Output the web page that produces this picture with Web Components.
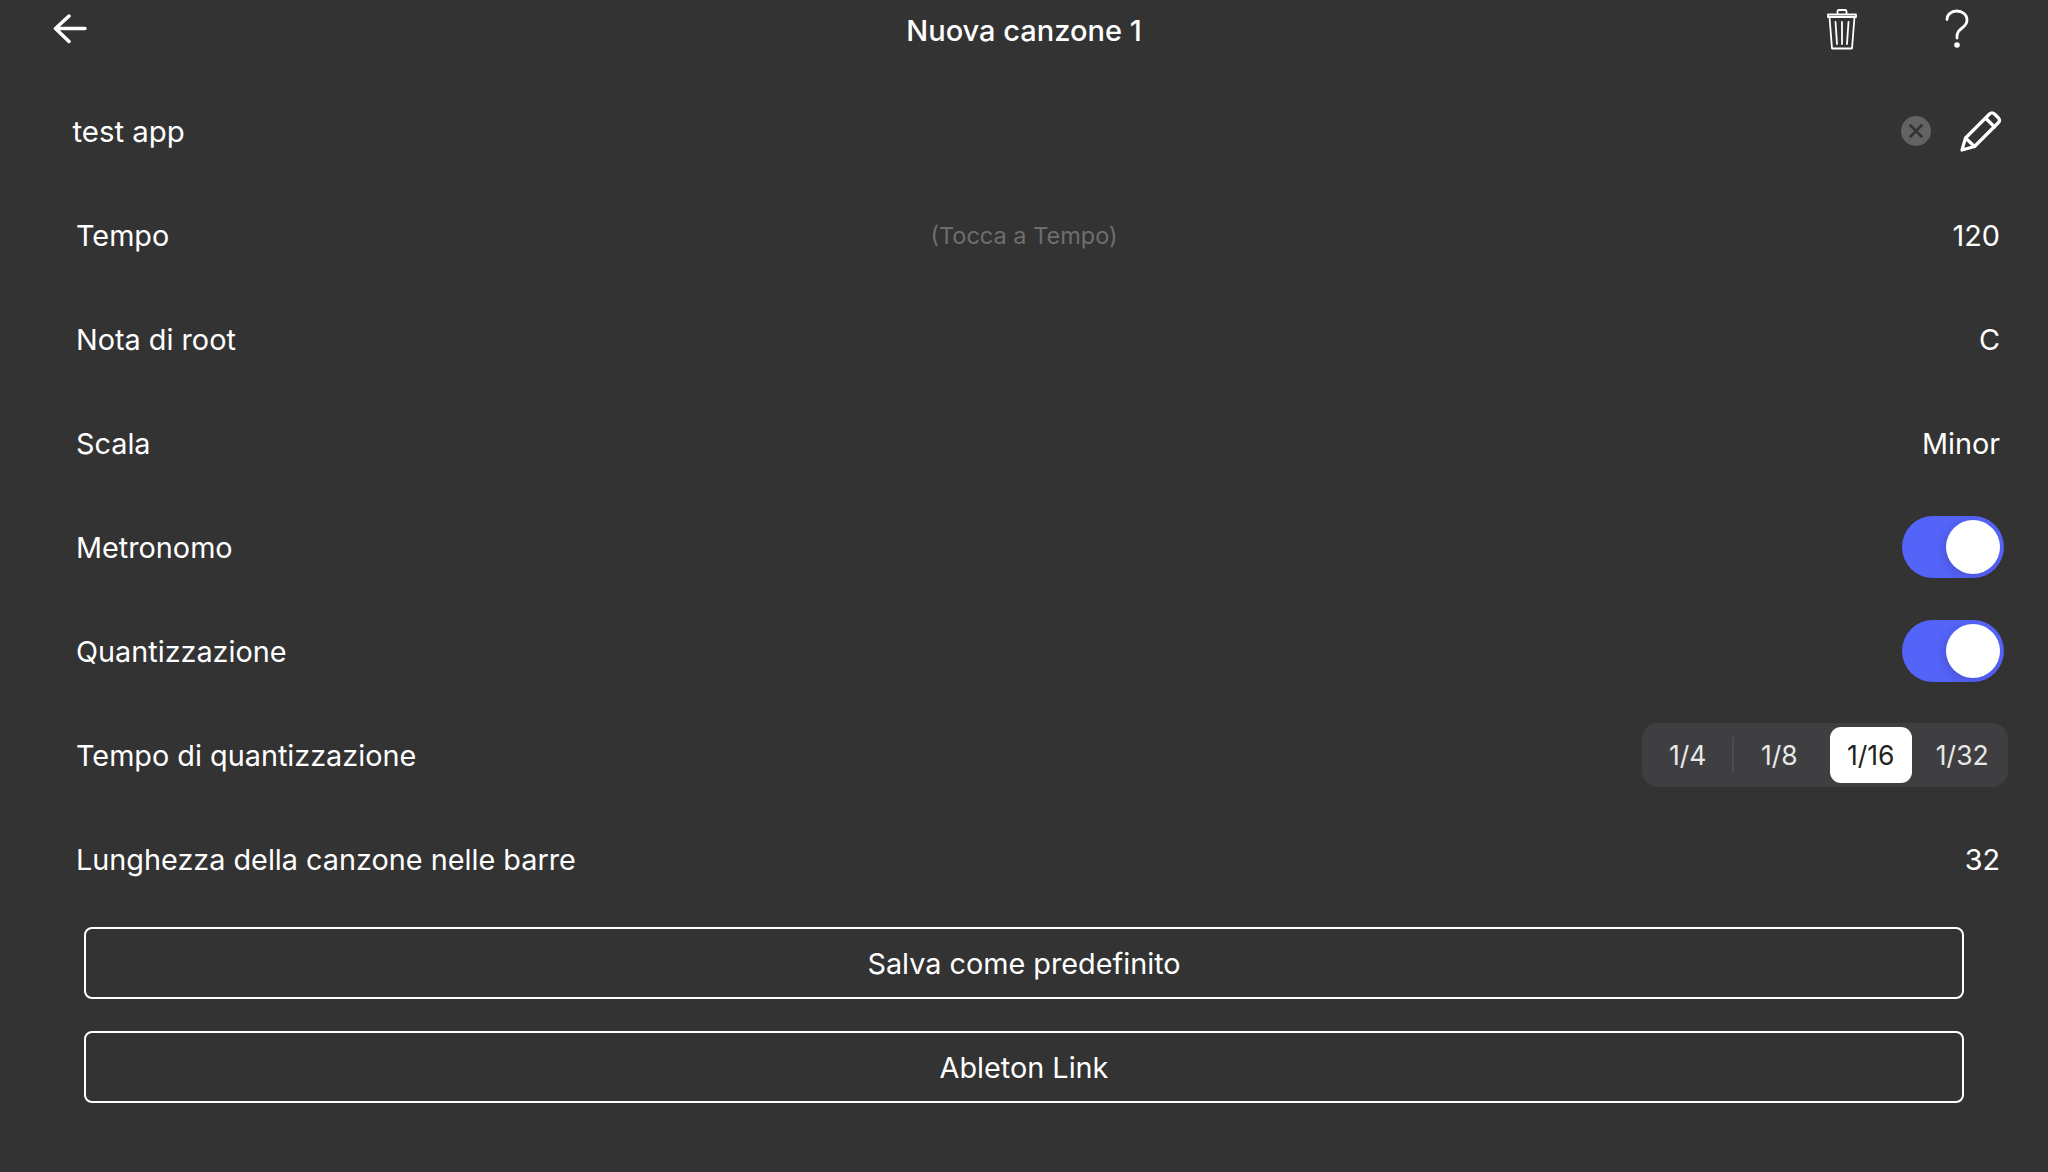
<!DOCTYPE html>
<html lang="it">
<head>
<meta charset="utf-8">
<title>Nuova canzone 1</title>
<style>
  html, body { margin: 0; height: 100%; background: #333333; }
  body { color: #fff; font-family: Inter, "Noto Sans", sans-serif; font-size: 28.800px; }
</style>
</head>
<body>

<song-settings>
  <top-bar title-text="Nuova canzone 1"></top-bar>
  <name-row>test app</name-row>
  <setting-row label="Tempo" hint="(Tocca a Tempo)">120</setting-row>
  <setting-row label="Nota di root">C</setting-row>
  <setting-row label="Scala">Minor</setting-row>
  <setting-row label="Metronomo"><toggle-switch slot="control"></toggle-switch></setting-row>
  <setting-row label="Quantizzazione"><toggle-switch slot="control"></toggle-switch></setting-row>
  <setting-row label="Tempo di quantizzazione"><segment-picker slot="control" options="1/4,1/8,1/16,1/32" selected="2"></segment-picker></setting-row>
  <setting-row label="Lunghezza della canzone nelle barre">32</setting-row>
  <outline-button>Salva come predefinito</outline-button>
  <outline-button>Ableton Link</outline-button>
</song-settings>

<script>
class SongSettings extends HTMLElement {
  constructor() {
    super();
    this.attachShadow({mode: 'open'}).innerHTML = `
      <style>
        :host { display: flex; flex-direction: column; height: 1172px; box-sizing: border-box; }
      </style>
      <slot></slot>
    `;
  }
}

class TopBar extends HTMLElement {
  constructor() {
    super();
    this.attachShadow({mode: 'open'}).innerHTML = `
      <style>
        :host { display: grid; grid-template-columns: minmax(0, 1fr) auto minmax(0, 1fr); align-items: center; height: 62px; margin-bottom: 17px; }
        .title { font-size: 29px; font-weight: 500; line-height: 62px; }
        .left { display: flex; padding-left: 53px; }
        .right { display: flex; justify-content: flex-end; align-items: center; padding-right: 79px; gap: 87px; }
        svg { display: block; fill: none; stroke: #fff; stroke-linecap: round; stroke-linejoin: round; }
      </style>
      <div class="left">
        <svg width="34" height="30" viewBox="0 0 34 30" stroke-width="3.500" style="margin-top:-4px">
          <path d="M32 14.500H3M16 2 2.500 14.500 16 27.500"/>
        </svg>
      </div>
      <div class="title">${this.getAttribute('title-text')}</div>
      <div class="right">
        <svg width="32" height="42" viewBox="0 0 32 42" stroke-width="1.800" style="margin-top:-4px">
          <path d="M2 6.500H30V9H2ZM3.500 9 6 40.500H26L28.500 9M11.500 6.500V3.500Q11.500 2 13 2H19Q20.500 2 20.500 3.500V6.500M9.500 14 11 36M16 14V36M22.500 14 21 36"/>
        </svg>
        <svg width="24" height="40" viewBox="0 0 24 40" stroke-width="2.800" style="margin-top:-4px">
          <path d="M2 10.500C2 5.500 6.500 2 11.500 2 17.500 2 22 5.800 22 11 22 15 20 17 16.500 19.500 13.500 21.600 12 23.500 12 27.500V29"/>
          <circle cx="12" cy="36" r="1.400" fill="#fff"/>
        </svg>
      </div>
    `;
  }
}

class NameRow extends HTMLElement {
  constructor() {
    super();
    this.attachShadow({mode: 'open'}).innerHTML = `
      <style>
        :host { display: flex; align-items: center; height: 104px; padding: 0 46px 0 72.500px; }
        .text { flex: 1; font-size: 29.400px; }
        .clear { width: 30px; height: 30px; margin-right: 29px; }
        svg { display: block; }
      </style>
      <div class="text"><slot></slot></div>
      <svg class="clear" viewBox="0 0 30 30">
        <circle cx="15" cy="15" r="15" fill="#636366"/>
        <path d="M9.500 9.500 20.500 20.500M20.500 9.500 9.500 20.500" stroke="#333" stroke-width="2.600" stroke-linecap="round"/>
      </svg>
      <svg width="42" height="42" viewBox="0 0 42 42" fill="none" stroke="#fff" stroke-width="3.200" stroke-linejoin="round" stroke-linecap="round">
        <path d="M2 40 5.500 28 29.500 4Q32 1.800 34.500 4L38.500 8Q40.500 10.500 38.500 12.500L14.500 36.500ZM5.500 28 14.500 36.500M25.500 8 34.500 17"/>
      </svg>
    `;
  }
}

class SettingRow extends HTMLElement {
  constructor() {
    super();
    const hint = this.getAttribute('hint');
    this.attachShadow({mode: 'open'}).innerHTML = `
      <style>
        :host { display: grid; grid-template-columns: minmax(0, 1fr) auto minmax(0, 1fr); align-items: center; height: 104px; padding: 0 48px 0 76px; font-size: 28.800px; }
        .label { white-space: nowrap; }
        .hint { font-size: 23.500px; color: #6e6e6e; margin-right: 28px; }
        .end { display: flex; justify-content: flex-end; align-items: center; }
      </style>
      <div class="label">${this.getAttribute('label')}</div>
      <div class="hint">${hint || ''}</div>
      <div class="end"><slot></slot><slot name="control"></slot></div>
    `;
  }
}

class ToggleSwitch extends HTMLElement {
  constructor() {
    super();
    this.attachShadow({mode: 'open'}).innerHTML = `
      <style>
        :host { display: block; width: 102px; height: 62px; margin-right: -4px; box-sizing: border-box; padding: 4px; border-radius: 31px; background: #5463f8; }
        .knob { width: 54px; height: 54px; margin-left: auto; border-radius: 50%; background: #fff; box-shadow: -3px 3px 8px rgba(0,0,0,.12); }
      </style>
      <div class="knob"></div>
    `;
  }
}

class SegmentPicker extends HTMLElement {
  constructor() {
    super();
    const selected = Number(this.getAttribute('selected'));
    const items = this.getAttribute('options').split(',').map((o, i) => `
      <div class="seg ${i === selected ? 'on' : ''} ${i === 0 ? 'div' : ''}">${o}</div>
    `).join('');
    this.attachShadow({mode: 'open'}).innerHTML = `
      <style>
        :host { display: grid; grid-template-columns: repeat(4, 1fr); width: 366px; height: 64px; margin-right: -8px; border-radius: 16px; background: #3f3f42; font-size: 26.500px; box-sizing: border-box; padding: 4px 0; color: #e8e8e8; }
        .seg { display: flex; align-items: center; justify-content: center; position: relative; border-radius: 11px; }
        .on { background: #fff; color: #222; margin: 0 5px; }
        .div::after { content: ""; position: absolute; right: 0; top: 10px; bottom: 10px; width: 2px; background: #4c4c50; }
      </style>
      ${items}
    `;
  }
}

class OutlineButton extends HTMLElement {
  constructor() {
    super();
    this.attachShadow({mode: 'open'}).innerHTML = `
      <style>
        :host { display: flex; align-items: center; justify-content: center; height: 72px; margin: 16px 84px; box-sizing: border-box; border: 2px solid #fff; border-radius: 8px; font-size: 28.800px; }
      </style>
      <slot></slot>
    `;
  }
}

customElements.define('song-settings', SongSettings);
customElements.define('top-bar', TopBar);
customElements.define('name-row', NameRow);
customElements.define('setting-row', SettingRow);
customElements.define('toggle-switch', ToggleSwitch);
customElements.define('segment-picker', SegmentPicker);
customElements.define('outline-button', OutlineButton);
</script>
</body>
</html>
